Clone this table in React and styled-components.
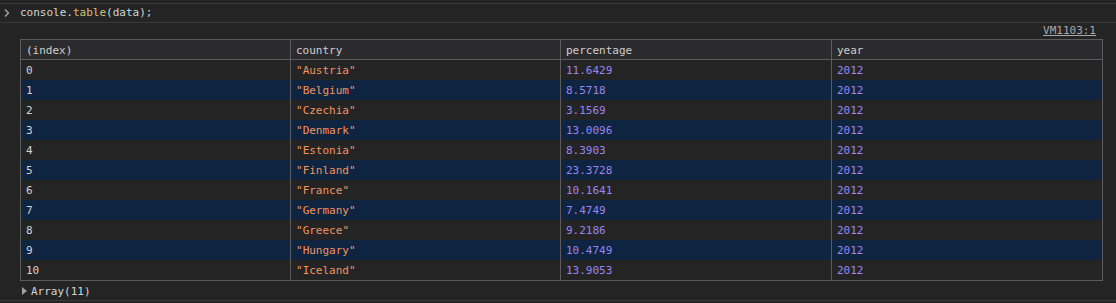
import React from "react";
import styled, { createGlobalStyle } from "styled-components";

const GlobalStyle = createGlobalStyle`
  html, body {
    margin: 0;
    padding: 0;
    background: #242424;
  }
  body {
    font-family: "DejaVu Sans Mono", "Liberation Mono", monospace;
    font-size: 11px;
    color: #d4d4d4;
  }
`;

const Console = styled.div`
  padding-top: 3px;
  width: 1116px;
`;

const Message = styled.div`
  position: relative;
  border-top: 1px solid #3a3a3a;
  padding-left: 20px;
`;

const Prompt = styled.span`
  position: absolute;
  left: 4px;
  top: 4px;
  width: 6px;
  height: 10px;
`;

const InputLine = styled.div`
  height: 18px;
  line-height: 18px;
  white-space: pre;
`;

const Method = styled.span`
  color: #d6c275;
`;

const LinkRow = styled.div`
  height: 15px;
  display: flex;
  justify-content: flex-end;
  padding-right: 20px;
  padding-top: 1px;
`;

const SourceLink = styled.span`
  color: #a9a9a9;
  text-decoration: underline;
  line-height: 14px;
`;

const Table = styled.table`
  border-collapse: collapse;
  width: 1083px;
  table-layout: fixed;
  border: 1px solid #5b5b5b;
`;

const Col = styled.col`
  width: ${({ $w }) => $w}px;
`;

const Th = styled.th`
  font-weight: normal;
  text-align: left;
  background: #2b2b2d;
  color: #cfcfcf;
  height: 17px;
  padding: 2px 5px 0;
  border-left: 1px solid #5b5b5b;
  border-bottom: 1px solid #5b5b5b;
`;

const Tr = styled.tr`
  background: ${({ $striped }) => ($striped ? "#0e2441" : "transparent")};
`;

const Td = styled.td`
  height: 20px;
  padding: 0 5px;
  border-left: 1px solid #5b5b5b;
  color: ${({ $kind }) =>
    $kind === "string" ? "#f29460" : $kind === "number" ? "#9a86f0" : "#d4d4d4"};
  white-space: pre;
`;

const ArrayLine = styled.div`
  display: flex;
  align-items: center;
  height: 18px;
  padding-top: 1px;
  gap: 4px;
`;

const Triangle = styled.span`
  width: 0;
  height: 0;
  margin-left: 2px;
  border-top: 4px solid transparent;
  border-bottom: 4px solid transparent;
  border-left: 5px solid #a0a0a0;
`;

const Bottom = styled.div`
  border-top: 1px solid #3a3a3a;
  height: 2px;
`;

const data = [
  ["Austria", "11.6429"],
  ["Belgium", "8.5718"],
  ["Czechia", "3.1569"],
  ["Denmark", "13.0096"],
  ["Estonia", "8.3903"],
  ["Finland", "23.3728"],
  ["France", "10.1641"],
  ["Germany", "7.4749"],
  ["Greece", "9.2186"],
  ["Hungary", "10.4749"],
  ["Iceland", "13.9053"],
];

export default function App() {
  return (
    <>
      <GlobalStyle />
      <Console>
        <Message>
          <Prompt>
            <svg width="6" height="10" viewBox="0 0 6 10">
              <path d="M1 1.5 L4.5 5 L1 8.5" fill="none" stroke="#a8a8a8" strokeWidth="1.3" />
            </svg>
          </Prompt>
          <InputLine>
            console.<Method>table</Method>(data);
          </InputLine>
        </Message>
        <Message>
          <LinkRow>
            <SourceLink>VM1103:1</SourceLink>
          </LinkRow>
          <Table>
            <colgroup>
              <Col $w={270} />
              <Col $w={270} />
              <Col $w={271} />
              <Col $w={271} />
            </colgroup>
            <thead>
              <tr>
                <Th>(index)</Th>
                <Th>country</Th>
                <Th>percentage</Th>
                <Th>year</Th>
              </tr>
            </thead>
            <tbody>
              {data.map(([country, pct], i) => (
                <Tr key={country} $striped={i % 2 === 1}>
                  <Td>{i}</Td>
                  <Td $kind="string">"{country}"</Td>
                  <Td $kind="number">{pct}</Td>
                  <Td $kind="number">2012</Td>
                </Tr>
              ))}
            </tbody>
          </Table>
          <ArrayLine>
            <Triangle />
            <span>Array(11)</span>
          </ArrayLine>
        </Message>
        <Bottom />
      </Console>
    </>
  );
}
